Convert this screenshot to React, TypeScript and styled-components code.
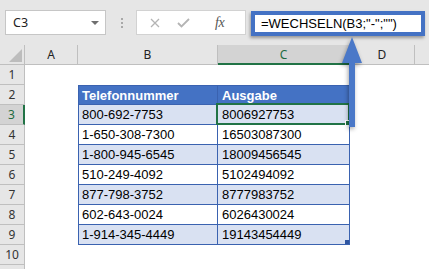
import React from 'react'
import styled, { createGlobalStyle } from 'styled-components'

const GlobalStyle = createGlobalStyle`
  html, body {
    margin: 0;
    padding: 0;
    background: #ffffff;
    overflow: hidden;
  }
  body {
    font-family: 'Noto Sans', 'Liberation Sans', sans-serif;
  }
`

const Window = styled.div`
  position: relative;
  width: 429px;
  height: 269px;
  overflow: hidden;
  background: #ffffff;
`

const FormulaBar = styled.div`
  display: flex;
  align-items: flex-start;
  height: 45px;
  background: #e6e6e6;
  padding-left: 5px;
  box-sizing: border-box;
`

const NameBox = styled.div`
  display: flex;
  align-items: center;
  justify-content: space-between;
  margin-top: 10px;
  width: 101px;
  height: 25px;
  box-sizing: border-box;
  background: #ffffff;
  border: 1px solid #c6c6c6;
  padding: 0 6px 0 7px;
  font-size: 12.5px;
  color: #222;
`

const DropTriangle = styled.span`
  width: 0;
  height: 0;
  border-left: 4px solid transparent;
  border-right: 4px solid transparent;
  border-top: 4px solid #6f6f6f;
`

const Grip = styled.div`
  display: flex;
  flex-direction: column;
  gap: 2px;
  margin: 18px 13px 0 15px;
  span {
    width: 2px;
    height: 2px;
    background: #a8a8a8;
  }
`

const ButtonBox = styled.div`
  display: flex;
  align-items: center;
  margin-top: 10px;
  width: 110px;
  height: 25px;
  box-sizing: border-box;
  background: #ffffff;
  border: 1px solid #d2d2d2;
  padding-left: 13px;
  gap: 17px;
`

const Fx = styled.span`
  font-family: 'Liberation Serif', serif;
  font-style: italic;
  font-size: 14px;
  color: #555;
  margin-left: 8px;
  letter-spacing: -0.5px;
`

const FormulaInput = styled.div`
  display: flex;
  align-items: center;
  margin: 11px 0 0 5px;
  width: 174px;
  height: 25px;
  box-sizing: border-box;
  background: #ffffff;
  border: 4px solid #4472c4;
  box-shadow: -1px 2px 3px rgba(0, 0, 0, 0.35);
  padding-left: 6px;
  font-family: 'Liberation Sans', sans-serif;
  font-size: 13px;
  color: #000;
  white-space: pre;
`

const Sheet = styled.div`
  display: grid;
  grid-template-columns: 25px 53px 140px 132px 65px 1fr;
  grid-auto-rows: 20px;
`

const Corner = styled.div`
  position: relative;
  background: #e6e6e6;
  border-right: 1px solid #bfbfbf;
  border-bottom: 1px solid #bfbfbf;
  box-sizing: border-box;
  &::after {
    content: '';
    position: absolute;
    right: 2px;
    bottom: 2px;
    width: 0;
    height: 0;
    border-left: 13px solid transparent;
    border-bottom: 13px solid #bdbdbd;
  }
`

const ColHeader = styled.div<{ $active?: boolean }>`
  display: flex;
  align-items: center;
  justify-content: center;
  box-sizing: border-box;
  background: ${p => (p.$active ? '#d3d3d3' : '#e6e6e6')};
  border-right: 1px solid #bfbfbf;
  border-bottom: ${p => (p.$active ? '2px solid #217346' : '1px solid #bfbfbf')};
  font-size: 12px;
  color: ${p => (p.$active ? '#1e6b41' : '#222')};
`

const HeaderFill = styled.div`
  background: #e6e6e6;
  border-bottom: 1px solid #bfbfbf;
`

const RowHeader = styled.div<{ $active?: boolean }>`
  display: flex;
  align-items: center;
  justify-content: center;
  box-sizing: border-box;
  background: ${p => (p.$active ? '#d3d3d3' : '#e6e6e6')};
  border-right: ${p => (p.$active ? '2px solid #217346' : '1px solid #bfbfbf')};
  border-bottom: 1px solid #bfbfbf;
  font-size: 12px;
  color: ${p => (p.$active ? '#1e6b41' : '#333')};
`

const Blank = styled.div``

type CellKind = 'head' | 'band' | 'plain'

const Cell = styled.div<{ $kind: CellKind; $first?: boolean }>`
  position: relative;
  display: flex;
  align-items: center;
  box-sizing: border-box;
  padding-left: ${p => (p.$first ? '3px' : '4px')};
  font-family: 'Liberation Sans', sans-serif;
  font-size: 13px;
  font-weight: ${p => (p.$kind === 'head' ? 700 : 400)};
  color: ${p => (p.$kind === 'head' ? '#ffffff' : '#000')};
  background: ${p =>
    p.$kind === 'head' ? '#4472c4' : p.$kind === 'band' ? '#d9e1f2' : '#ffffff'};
  border-bottom: 1px solid #3a62b0;
  border-right: 1px solid #3a62b0;
  border-left: ${p => (p.$first ? '1px solid #3a62b0' : 'none')};
  border-top: ${p => (p.$kind === 'head' ? '1px solid #3a62b0' : 'none')};
`

const Selection = styled.div`
  position: absolute;
  inset: -2px -1px -1px -2px;
  border: 2px solid #217346;
  pointer-events: none;
  &::after {
    content: '';
    position: absolute;
    right: -4px;
    bottom: -4px;
    width: 5px;
    height: 5px;
    background: #217346;
    border: 1px solid #fff;
  }
`

const ResizeHandle = styled.span`
  position: absolute;
  right: 0;
  bottom: 0;
  width: 4px;
  height: 4px;
  background: #2f55a0;
`

const Arrow = styled.svg`
  position: absolute;
  left: 338px;
  top: 34px;
  filter: drop-shadow(-1px 2px 2px rgba(0, 0, 0, 0.35));
`

const rows: [string, string][] = [
  ['800-692-7753', '8006927753'],
  ['1-650-308-7300', '16503087300'],
  ['1-800-945-6545', '18009456545'],
  ['510-249-4092', '5102494092'],
  ['877-798-3752', '8777983752'],
  ['602-643-0024', '6026430024'],
  ['1-914-345-4449', '19143454449'],
]

const columns = ['A', 'B', 'C', 'D']

export default function App() {
  return (
    <Window>
      <GlobalStyle />
      <FormulaBar>
        <NameBox>
          C3
          <DropTriangle />
        </NameBox>
        <Grip>
          <span />
          <span />
          <span />
        </Grip>
        <ButtonBox>
          <svg width="10" height="10" viewBox="0 0 10 10">
            <path d="M1 1 L9 9 M9 1 L1 9" stroke="#b4b4b4" strokeWidth="1.3" />
          </svg>
          <svg width="13" height="10" viewBox="0 0 13 10">
            <path d="M1 5 L4.5 8.5 L12 1" stroke="#b4b4b4" strokeWidth="1.8" fill="none" />
          </svg>
          <Fx>fx</Fx>
        </ButtonBox>
        <FormulaInput>=WECHSELN(B3;"-";"")</FormulaInput>
      </FormulaBar>

      <Sheet>
        <Corner />
        {columns.map(c => (
          <ColHeader key={c} $active={c === 'C'}>
            {c}
          </ColHeader>
        ))}
        <HeaderFill />

        {Array.from({ length: 11 }, (_, i) => {
          const n = i + 1
          const data = n >= 3 && n <= 9 ? rows[n - 3] : null
          const kind: CellKind | null =
            n === 2 ? 'head' : data ? (n % 2 === 1 ? 'band' : 'plain') : null
          return (
            <React.Fragment key={n}>
              <RowHeader $active={n === 3}>{n <= 10 ? n : ''}</RowHeader>
              <Blank />
              {kind ? (
                <>
                  <Cell $kind={kind} $first>
                    {n === 2 ? 'Telefonnummer' : data![0]}
                  </Cell>
                  <Cell $kind={kind}>
                    {n === 2 ? 'Ausgabe' : data![1]}
                    {n === 3 && <Selection />}
                    {n === 9 && <ResizeHandle />}
                  </Cell>
                </>
              ) : (
                <>
                  <Blank />
                  <Blank />
                </>
              )}
              <Blank />
              <Blank />
            </React.Fragment>
          )
        })}
      </Sheet>

      <Arrow width="28" height="96" viewBox="0 0 28 96">
        <path d="M14 3 L24 29 L17 29 L17 93 L11 93 L11 29 L4 29 Z" fill="#4a78c8" />
      </Arrow>
    </Window>
  )
}
